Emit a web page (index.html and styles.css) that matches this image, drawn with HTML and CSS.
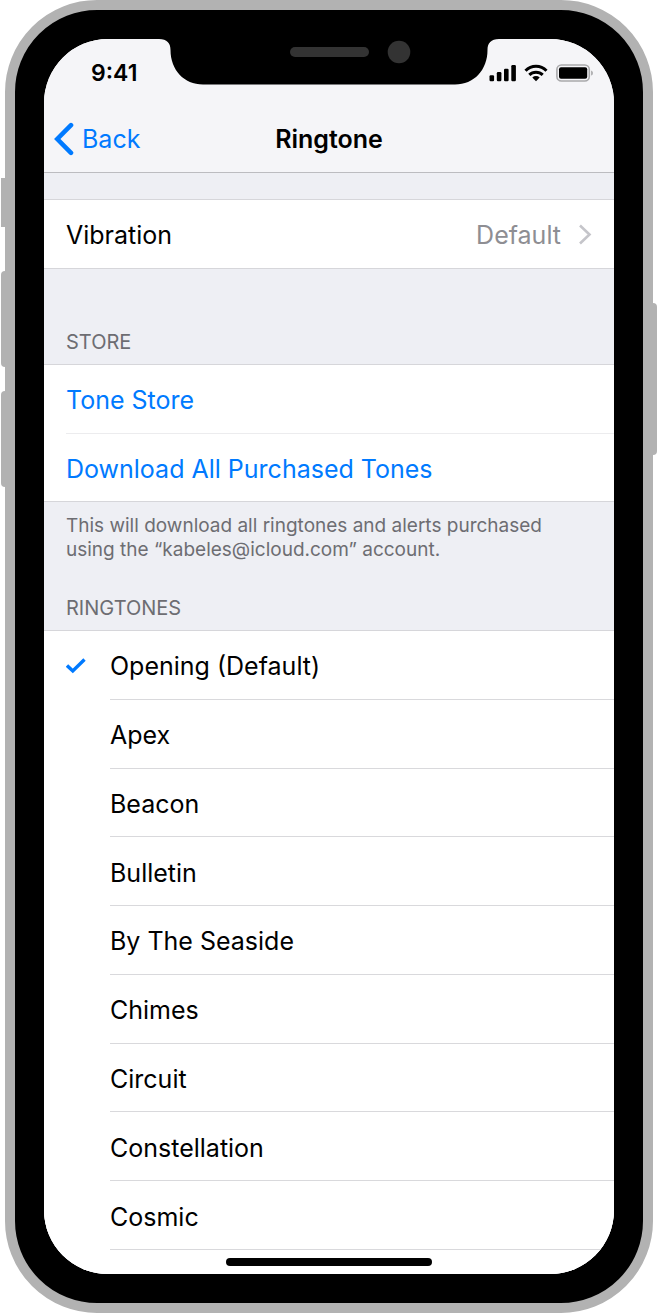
FILE: index.html
```html
<!DOCTYPE html>
<html lang="en">
<head>
<meta charset="utf-8">
<meta name="viewport" content="width=device-width, initial-scale=1">
<title>Ringtone</title>
<link rel="stylesheet" href="styles.css">
</head>
<body>
<div class="phone">
  <span class="side-key mute"></span>
  <span class="side-key volume-up"></span>
  <span class="side-key volume-down"></span>
  <span class="side-key power"></span>
  <div class="screen">
    <svg class="notch" viewBox="0 0 344 46" aria-hidden="true">
      <path d="M0 0H2C10 0 13.500 4 13.500 11C13.500 31 27 45.500 46 45.500H298C317 45.500 330.500 31 330.500 11C330.500 4 334 0 342 0H344Z" fill="#000"/>
      <rect x="133" y="8" width="79" height="10" rx="5" fill="#333"/>
      <circle cx="242" cy="13" r="11.300" fill="#333"/>
    </svg>
    <header class="header">
      <div class="status">
        <span class="time">9:41</span>
        <span class="indicators">
          <svg width="27" height="18" viewBox="0 0 27 18" role="img" aria-label="Signal">
            <rect x="0.500" y="11.300" width="4.600" height="6" rx="1.200"/><rect x="7.800" y="8" width="4.600" height="9.300" rx="1.200"/><rect x="15" y="4.800" width="4.600" height="12.500" rx="1.200"/><rect x="22.300" y="1" width="4.600" height="16.300" rx="1.200"/>
          </svg>
          <svg width="24" height="18" viewBox="0 0 24 18" role="img" aria-label="Wi-Fi">
            <g fill="none" stroke="#000" stroke-width="3"><path d="M1.500 6.800C7.400.8 16.600.8 22.500 6.800"/><path d="M5.300 10.900C9 7.300 15 7.300 18.700 10.900"/></g>
            <path d="M8.300 13.400C10.500 11.600 13.500 11.600 15.700 13.400L12 17.300Z"/>
          </svg>
          <svg width="38" height="18" viewBox="0 0 38 18" role="img" aria-label="Battery">
            <rect x="0.900" y="1" width="32.400" height="16" rx="4.500" fill="none" stroke="#a9a9ab" stroke-width="1.600"/><rect x="3" y="3.200" width="28.200" height="11.600" rx="2"/><path d="M35.100 6.400C37.500 7.200 37.500 10.800 35.100 11.600Z" fill="#a9a9ab"/>
          </svg>
        </span>
      </div>
      <nav class="navbar">
        <a class="back" href="#">
          <svg width="20" height="34" viewBox="0 0 20 34" aria-hidden="true"><path d="M17 3.200L3.300 17L17 30.800" fill="none" stroke="#007aff" stroke-width="4.600" stroke-linecap="round" stroke-linejoin="miter"/></svg>
          Back
        </a>
        <h1 class="title">Ringtone</h1>
      </nav>
    </header>
    <main class="content">
      <section class="group first">
        <a class="row" href="#">
          Vibration
          <span class="value">Default
            <svg width="14" height="22" viewBox="0 0 14 22" aria-hidden="true"><path d="M2 1.500L11.500 10.500L2 19.500" fill="none" stroke="#c5c5ca" stroke-width="2.600"/></svg>
          </span>
        </a>
      </section>
      <h2 class="heading store">STORE</h2>
      <section class="group links">
        <a class="row" href="#">Tone Store</a>
        <a class="row" href="#">Download All Purchased Tones</a>
      </section>
      <p class="note">This will download all ringtones and alerts purchased using the “kabeles@icloud.com” account.</p>
      <h2 class="heading">RINGTONES</h2>
      <section class="tones">
        <label class="tone"><input type="radio" name="tone" checked><svg class="tick" width="21" height="17" viewBox="0 0 21 17" aria-hidden="true"><path d="M1 8.500L6.800 14L18.500 2.500" fill="none" stroke="#007aff" stroke-width="3.400"/></svg><span class="name">Opening (Default)</span></label>
        <label class="tone"><input type="radio" name="tone"><span class="name">Apex</span></label>
        <label class="tone"><input type="radio" name="tone"><span class="name">Beacon</span></label>
        <label class="tone"><input type="radio" name="tone"><span class="name">Bulletin</span></label>
        <label class="tone"><input type="radio" name="tone"><span class="name">By The Seaside</span></label>
        <label class="tone"><input type="radio" name="tone"><span class="name">Chimes</span></label>
        <label class="tone"><input type="radio" name="tone"><span class="name">Circuit</span></label>
        <label class="tone"><input type="radio" name="tone"><span class="name">Constellation</span></label>
        <label class="tone"><input type="radio" name="tone"><span class="name">Cosmic</span></label>
      </section>
    </main>
    <span class="home-bar"></span>
  </div>
</div>
</body>
</html>
```
FILE: styles.css
```css
* { box-sizing: border-box; }

body {
  margin: 0;
  padding: 0 5px 1px;
  min-height: 100vh;
  display: flex;
  background: #fff;
  color: #000;
  font-family: Inter, "Liberation Sans", sans-serif;
  font-size: 25px;
  line-height: 32px;
}

a { color: inherit; text-decoration: none; }

.phone {
  position: relative;
  flex: 1;
  display: flex;
  padding: 29px;
  border: 10px solid #b2b2b2;
  border-radius: 92px;
  background: #000;
}

.side-key {
  position: absolute;
  left: -14px;
  width: 4px;
  background: #b2b2b2;
  border-radius: 4px 0 0 4px;
}
.mute { top: 168px; height: 49px; border-radius: 0; }
.volume-up { top: 261px; height: 96px; }
.volume-down { top: 381px; height: 96px; }
.power { top: 293px; height: 152px; left: auto; right: -14px; border-radius: 0 4px 4px 0; }

.screen {
  position: relative;
  flex: 1;
  display: flex;
  flex-direction: column;
  overflow: hidden;
  border-radius: 64px;
  background: #fff;
}

.notch {
  position: absolute;
  top: 0;
  left: 50%;
  width: 344px;
  height: 46px;
  transform: translateX(-50%);
}

.header {
  background: #f5f5f8;
  border-bottom: 1px solid #bcbcc0;
}

.status {
  display: flex;
  justify-content: space-between;
  align-items: center;
  padding: 18px 20px 0 47px;
}
.time { font-size: 23px; font-weight: 600; }
.indicators { display: flex; gap: 8px; }

.navbar {
  display: grid;
  grid-template-columns: 1fr auto 1fr;
  align-items: center;
  padding: 33px 10px 16px;
}
.back {
  display: flex;
  align-items: center;
  gap: 8px;
  color: #007aff;
}
.title { margin: 0; font-size: 25px; font-weight: 600; }

.content {
  flex: 1;
  display: flex;
  flex-direction: column;
  background: #eeeff4;
}

.group {
  background: #fff;
  border: solid #d6d6da;
  border-width: 1px 0;
}
.first { margin-top: 26px; }

.row {
  display: flex;
  align-items: center;
  justify-content: space-between;
  height: 68px;
  padding: 2px 22px 0 0;
  margin-left: 22px;
}
.row + .row { border-top: 1px solid #ececee; }
.links { color: #007aff; }
.value {
  display: flex;
  align-items: center;
  gap: 17px;
  color: #8e8e93;
}

.heading {
  margin: 0;
  padding: 0 22px 10px;
  color: #6d6d72;
  font-size: 20px;
  font-weight: 400;
  line-height: 24px;
}
.store { padding-top: 61px; }

.note {
  margin: 0;
  padding: 12px 22px 34px;
  color: #6d6d72;
  font-size: 19px;
  line-height: 24px;
}

.tones {
  flex: 1;
  display: grid;
  grid-auto-rows: 1fr;
  padding-bottom: 24px;
  border-top: 1px solid #d6d6da;
  background: #fff;
}
.tone {
  display: grid;
  grid-template-columns: 44px 1fr;
  align-items: center;
  padding-left: 22px;
}
.tone input {
  appearance: none;
  grid-area: 1 / 1;
  width: 20px;
  height: 20px;
  margin: 0;
}
.tick { grid-area: 1 / 1; }
.name {
  grid-area: 1 / 2;
  align-self: stretch;
  display: flex;
  align-items: center;
  padding-top: 3px;
  border-bottom: 1px solid #d9d9dc;
}

.home-bar {
  position: absolute;
  bottom: 8px;
  left: 50%;
  width: 206px;
  height: 8px;
  border-radius: 4px;
  background: #000;
  transform: translateX(-50%);
}
```
